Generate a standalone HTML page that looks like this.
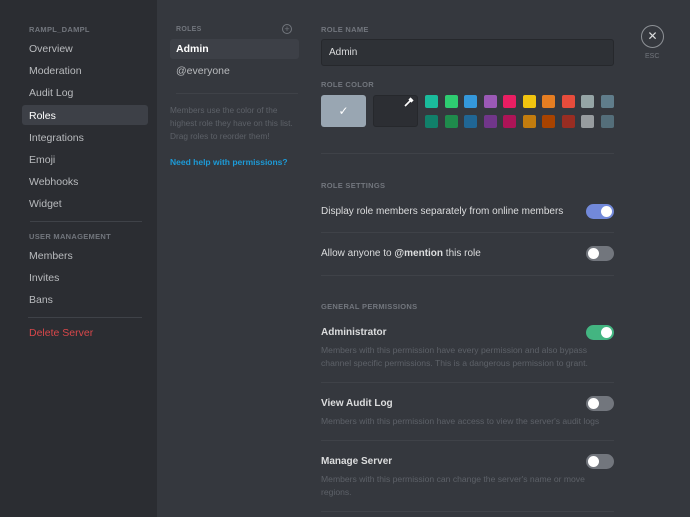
<!DOCTYPE html><html><head><style>
*{margin:0;padding:0;box-sizing:border-box}
body{width:690px;height:517px;overflow:hidden;background:#35383e;font-family:"Liberation Sans",sans-serif;position:relative}
.a{position:absolute;white-space:nowrap}
.side{left:0;top:0;width:157px;height:517px;background:#2b2d32}
.h{font-size:7.5px;font-weight:bold;color:#72767d;letter-spacing:.3px}
.n{font-size:10.5px;color:#b9bbbe;left:29px}
.t{font-size:10px;color:#dcddde;left:321px}
.d{font-size:8.6px;color:#5d6168;left:321px;line-height:13px}
.hr{height:1px;background:#3f4248}
.tg{width:28px;height:15px;border-radius:8px;background:#72767d;left:586px}
.tg::after{content:"";position:absolute;top:2px;width:11px;height:11px;border-radius:50%;background:#fff;left:2px}
.tg.on::after{left:15px}
.sw{width:13px;height:13px;border-radius:2px}
</style></head><body>
<div class="a side"></div>
<div class="a h" style="left:29px;top:25px">RAMPL_DAMPL</div>
<div class="a n" style="top:43px">Overview</div>
<div class="a n" style="top:65px">Moderation</div>
<div class="a n" style="top:87px">Audit Log</div>
<div class="a" style="left:22px;top:105px;width:126px;height:20px;background:#3d4047;border-radius:3px"></div>
<div class="a n" style="top:110px;color:#fff">Roles</div>
<div class="a n" style="top:132px">Integrations</div>
<div class="a n" style="top:154px">Emoji</div>
<div class="a n" style="top:176px">Webhooks</div>
<div class="a n" style="top:198px">Widget</div>
<div class="a hr" style="left:30px;top:221px;width:112px"></div>
<div class="a h" style="left:29px;top:232px">USER MANAGEMENT</div>
<div class="a n" style="top:250px">Members</div>
<div class="a n" style="top:272px">Invites</div>
<div class="a n" style="top:294px">Bans</div>
<div class="a hr" style="left:28px;top:317px;width:114px"></div>
<div class="a n" style="top:327px;color:#d8474a">Delete Server</div>

<div class="a h" style="left:176px;top:26px;font-size:7px">ROLES</div>
<div class="a" style="left:282px;top:24px;width:10px;height:10px;border:1px solid #72767d;border-radius:50%;color:#72767d;font-size:9px;line-height:8px;text-align:center">+</div>
<div class="a" style="left:170px;top:39px;width:129px;height:20px;background:#3d4047;border-radius:3px"></div>
<div class="a" style="left:176px;top:43px;font-size:10.5px;font-weight:bold;color:#fff">Admin</div>
<div class="a" style="left:176px;top:65px;font-size:10.5px;color:#b9bbbe">@everyone</div>
<div class="a hr" style="left:176px;top:93px;width:122px"></div>
<div class="a" style="left:170px;top:104px;font-size:8.3px;color:#5d6168;line-height:13px">Members use the color of the<br>highest role they have on this list.<br>Drag roles to reorder them!</div>
<div class="a" style="left:170px;top:157px;font-size:8.5px;color:#1d9ad6;font-weight:bold">Need help with permissions?</div>

<div class="a h" style="left:321px;top:25px">ROLE NAME</div>
<div class="a" style="left:321px;top:39px;width:293px;height:27px;background:#2e3136;border:1px solid #26282c;border-radius:3px"></div>
<div class="a" style="left:329px;top:47px;font-size:10px;color:#dcddde">Admin</div>
<div class="a h" style="left:321px;top:80px">ROLE COLOR</div>
<div class="a" style="left:321px;top:95px;width:45px;height:32px;background:#99a6b2;border-radius:3px;color:#fff;text-align:center;line-height:32px;font-size:12px">✓</div>
<div class="a" style="left:373px;top:95px;width:45px;height:32px;background:#2c2e33;border:1px solid #26282c;border-radius:3px"></div>
<svg class="a" style="left:404px;top:97px" width="10" height="10"><path d="M1 9L6 4M5 2L8 5M6 1l3 3" stroke="#fff" stroke-width="1.6" fill="none"/></svg>
<div class="a" style="left:425px;top:95px;display:grid;grid-template-columns:repeat(10,13px);gap:7px 6.5px">
<div class="sw" style="background:#1abc9c"></div><div class="sw" style="background:#2ecc71"></div><div class="sw" style="background:#3498db"></div><div class="sw" style="background:#9b59b6"></div><div class="sw" style="background:#e91e63"></div><div class="sw" style="background:#f1c40f"></div><div class="sw" style="background:#e67e22"></div><div class="sw" style="background:#e74c3c"></div><div class="sw" style="background:#95a5a6"></div><div class="sw" style="background:#607d8b"></div>
<div class="sw" style="background:#11806a"></div><div class="sw" style="background:#1f8b4c"></div><div class="sw" style="background:#206694"></div><div class="sw" style="background:#71368a"></div><div class="sw" style="background:#ad1457"></div><div class="sw" style="background:#c27c0e"></div><div class="sw" style="background:#a84300"></div><div class="sw" style="background:#992d22"></div><div class="sw" style="background:#979c9f"></div><div class="sw" style="background:#546e7a"></div>
</div>
<div class="a hr" style="left:321px;top:153px;width:293px"></div>
<div class="a h" style="left:321px;top:181px">ROLE SETTINGS</div>
<div class="a t" style="top:206px">Display role members separately from online members</div>
<div class="a tg on" style="top:204px;background:#7289da"></div>
<div class="a hr" style="left:321px;top:232px;width:293px"></div>
<div class="a t" style="top:248px">Allow anyone to <b>@mention</b> this role</div>
<div class="a tg" style="top:246px"></div>
<div class="a hr" style="left:321px;top:275px;width:293px"></div>
<div class="a h" style="left:321px;top:302px">GENERAL PERMISSIONS</div>
<div class="a t" style="top:327px;font-weight:bold">Administrator</div>
<div class="a tg on" style="top:325px;background:#43b581"></div>
<div class="a d" style="top:344px">Members with this permission have every permission and also bypass<br>channel specific permissions. This is a dangerous permission to grant.</div>
<div class="a hr" style="left:321px;top:382px;width:293px"></div>
<div class="a t" style="top:398px;font-weight:bold">View Audit Log</div>
<div class="a tg" style="top:396px"></div>
<div class="a d" style="top:415px">Members with this permission have access to view the server's audit logs</div>
<div class="a hr" style="left:321px;top:440px;width:293px"></div>
<div class="a t" style="top:456px;font-weight:bold">Manage Server</div>
<div class="a tg" style="top:454px"></div>
<div class="a d" style="top:473px">Members with this permission can change the server's name or move<br>regions.</div>
<div class="a hr" style="left:321px;top:511px;width:293px"></div>

<div class="a" style="left:641px;top:25px;width:23px;height:23px;border:1.5px solid #8e9297;border-radius:50%;color:#dcddde;text-align:center;line-height:20px;font-size:12px">✕</div>
<div class="a" style="left:645px;top:53px;font-size:7px;color:#72767d">ESC</div>
</body></html>
